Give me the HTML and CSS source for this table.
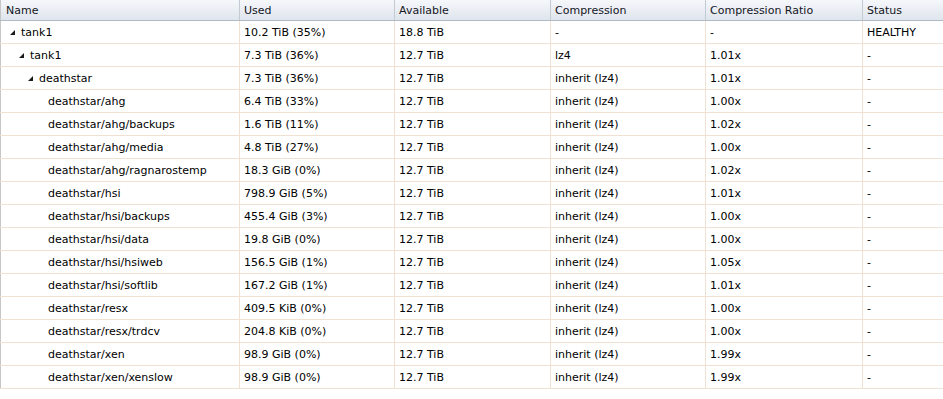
FILE: index.html
```html
<!DOCTYPE html>
<html>
<head>
<meta charset="utf-8">
<link rel="stylesheet" href="styles.css">
</head>
<body>
<table class="grid">
  <colgroup>
    <col class="c-name"><col class="c-used"><col class="c-avail"><col class="c-comp"><col class="c-ratio"><col class="c-status">
  </colgroup>
  <thead>
    <tr><th>Name</th><th>Used</th><th>Available</th><th>Compression</th><th>Compression Ratio</th><th>Status</th></tr>
  </thead>
  <tbody>
    <tr><td class="name l0"><span class="exp"></span>tank1</td><td>10.2 TiB (35%)</td><td>18.8 TiB</td><td>-</td><td>-</td><td>HEALTHY</td></tr>
    <tr><td class="name l1"><span class="exp"></span>tank1</td><td>7.3 TiB (36%)</td><td>12.7 TiB</td><td>lz4</td><td>1.01x</td><td>-</td></tr>
    <tr><td class="name l2"><span class="exp"></span>deathstar</td><td>7.3 TiB (36%)</td><td>12.7 TiB</td><td>inherit (lz4)</td><td>1.01x</td><td>-</td></tr>
    <tr><td class="name l3">deathstar/ahg</td><td>6.4 TiB (33%)</td><td>12.7 TiB</td><td>inherit (lz4)</td><td>1.00x</td><td>-</td></tr>
    <tr><td class="name l3">deathstar/ahg/backups</td><td>1.6 TiB (11%)</td><td>12.7 TiB</td><td>inherit (lz4)</td><td>1.02x</td><td>-</td></tr>
    <tr><td class="name l3">deathstar/ahg/media</td><td>4.8 TiB (27%)</td><td>12.7 TiB</td><td>inherit (lz4)</td><td>1.00x</td><td>-</td></tr>
    <tr><td class="name l3">deathstar/ahg/ragnarostemp</td><td>18.3 GiB (0%)</td><td>12.7 TiB</td><td>inherit (lz4)</td><td>1.02x</td><td>-</td></tr>
    <tr><td class="name l3">deathstar/hsi</td><td>798.9 GiB (5%)</td><td>12.7 TiB</td><td>inherit (lz4)</td><td>1.01x</td><td>-</td></tr>
    <tr><td class="name l3">deathstar/hsi/backups</td><td>455.4 GiB (3%)</td><td>12.7 TiB</td><td>inherit (lz4)</td><td>1.00x</td><td>-</td></tr>
    <tr><td class="name l3">deathstar/hsi/data</td><td>19.8 GiB (0%)</td><td>12.7 TiB</td><td>inherit (lz4)</td><td>1.00x</td><td>-</td></tr>
    <tr><td class="name l3">deathstar/hsi/hsiweb</td><td>156.5 GiB (1%)</td><td>12.7 TiB</td><td>inherit (lz4)</td><td>1.05x</td><td>-</td></tr>
    <tr><td class="name l3">deathstar/hsi/softlib</td><td>167.2 GiB (1%)</td><td>12.7 TiB</td><td>inherit (lz4)</td><td>1.01x</td><td>-</td></tr>
    <tr><td class="name l3">deathstar/resx</td><td>409.5 KiB (0%)</td><td>12.7 TiB</td><td>inherit (lz4)</td><td>1.00x</td><td>-</td></tr>
    <tr><td class="name l3">deathstar/resx/trdcv</td><td>204.8 KiB (0%)</td><td>12.7 TiB</td><td>inherit (lz4)</td><td>1.00x</td><td>-</td></tr>
    <tr><td class="name l3">deathstar/xen</td><td>98.9 GiB (0%)</td><td>12.7 TiB</td><td>inherit (lz4)</td><td>1.99x</td><td>-</td></tr>
    <tr><td class="name l3">deathstar/xen/xenslow</td><td>98.9 GiB (0%)</td><td>12.7 TiB</td><td>inherit (lz4)</td><td>1.99x</td><td>-</td></tr>
  </tbody>
</table>
</body>
</html>
```
FILE: styles.css
```css
html, body {
  margin: 0;
  padding: 0;
  background: #ffffff;
}
.grid {
  border-collapse: collapse;
  table-layout: fixed;
  width: 943px;
  font-family: "DejaVu Sans", Verdana, sans-serif;
  font-size: 11px;
  color: #000000;
  border-left: 1px solid #c6c6c6;
}
.c-name { width: 239px; }
.c-used { width: 155px; }
.c-avail { width: 156px; }
.c-comp { width: 155px; }
.c-ratio { width: 157px; }
.c-status { width: 81px; }
.grid th {
  height: 20px;
  padding: 0 0 0 4px;
  text-align: left;
  font-weight: normal;
  color: #15161e;
  background: linear-gradient(#f5f7fa, #dfe5ed);
  border-bottom: 1px solid #b2bac6;
  border-left: 1px solid #c4cad3;
  white-space: nowrap;
  overflow: hidden;
}
.grid th:first-child {
  border-left: none;
  padding-left: 5px;
}
.grid td {
  height: 21px;
  padding: 1px 0 0 4px;
  border-bottom: 1px solid #f0e1d2;
  border-left: 1px solid #f0e1d2;
  white-space: nowrap;
  overflow: hidden;
}
.grid td:first-child {
  border-left: none;
}
.name.l0 { padding-left: 9px; }
.name.l1 { padding-left: 18px; }
.name.l2 { padding-left: 27px; }
.name.l3 { padding-left: 47px; }
.exp {
  display: inline-block;
  width: 0;
  height: 0;
  border-style: solid;
  border-width: 0 0 5px 5px;
  border-color: transparent transparent #1a1a1a transparent;
  margin-right: 6px;
  vertical-align: 1px;
}
```
